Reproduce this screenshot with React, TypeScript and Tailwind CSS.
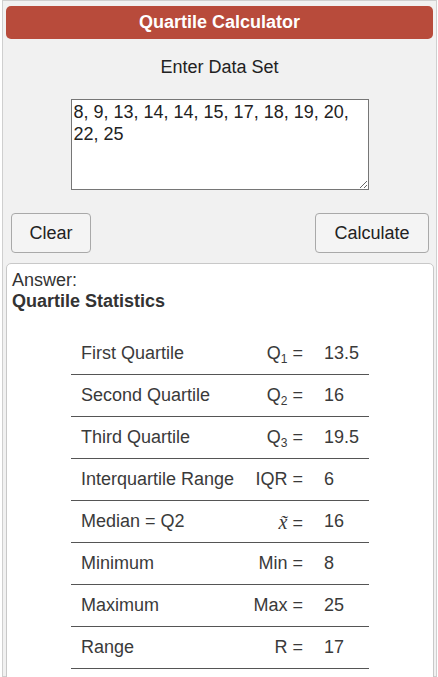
import React from "react";

const Sub = ({ n }: { n: string }) => (
  <span className="relative top-[4px] text-[12px]">{n}</span>
);

const rows: { label: string; sym: React.ReactNode; value: string }[] = [
  { label: "First Quartile", sym: <>Q<Sub n="1" /> =</>, value: "13.5" },
  { label: "Second Quartile", sym: <>Q<Sub n="2" /> =</>, value: "16" },
  { label: "Third Quartile", sym: <>Q<Sub n="3" /> =</>, value: "19.5" },
  { label: "Interquartile Range", sym: "IQR =", value: "6" },
  {
    label: "Median = Q2",
    sym: (
      <>
        <span className="italic font-['Liberation_Serif',serif] text-[20px]">x̃</span> =
      </>
    ),
    value: "16",
  },
  { label: "Minimum", sym: "Min =", value: "8" },
  { label: "Maximum", sym: "Max =", value: "25" },
  { label: "Range", sym: "R =", value: "17" },
];

export default function App() {
  return (
    <div className="w-[438px] h-[677px] overflow-hidden bg-white font-['Liberation_Sans',Arial,sans-serif] text-[#222]">
      <div className="ml-[2px] mr-[1px] h-full border border-[#cfcfcf] bg-[#f1f1f1] px-[3px] pt-[5px]">
        <div className="h-[33px] rounded-[5px] bg-[#b84b3b] flex items-center justify-center text-white font-bold text-[18px]">
          Quartile Calculator
        </div>
        <div className="mt-[17px] text-center text-[18px] leading-[22px]">Enter Data Set</div>
        <div className="mt-[21px] flex justify-center">
          <textarea
            className="w-[298px] h-[91px] border border-[#767676] bg-white px-[2px] py-[1px] text-[18px] leading-[22px] text-[#222] resize-y outline-none"
            defaultValue="8, 9, 13, 14, 14, 15, 17, 18, 19, 20, 22, 25"
          />
        </div>
        <div className="mt-[23px] flex justify-between pl-[5px] pr-[4px]">
          <button className="w-[80px] h-[40px] rounded-[4px] border border-[#a9a9a9] bg-[#f4f4f4] text-[18px] text-[#222]">
            Clear
          </button>
          <button className="w-[114px] h-[40px] rounded-[4px] border border-[#a9a9a9] bg-[#f4f4f4] text-[18px] text-[#222]">
            Calculate
          </button>
        </div>
        <div className="mt-[10px] mr-[-1px] h-[500px] rounded-[5px] border border-[#c8c8c8] bg-white px-[5px] pt-[6px]">
          <div className="text-[18px] leading-[21px] text-[#333]">Answer:</div>
          <div className="text-[18px] leading-[21px] font-bold text-[#333]">Quartile Statistics</div>
          <div className="mt-[21px] ml-[59px] w-[298px] text-[18px] text-[#3a3a3a]">
            {rows.map((r) => (
              <div key={r.label} className="flex h-[42px] items-center border-b border-[#555]">
                <div className="flex-1 pl-[10px]">{r.label}</div>
                <div className="pr-[10px] text-right">{r.sym}</div>
                <div className="w-[56px] pl-[11px]">{r.value}</div>
              </div>
            ))}
          </div>
        </div>
      </div>
    </div>
  );
}
